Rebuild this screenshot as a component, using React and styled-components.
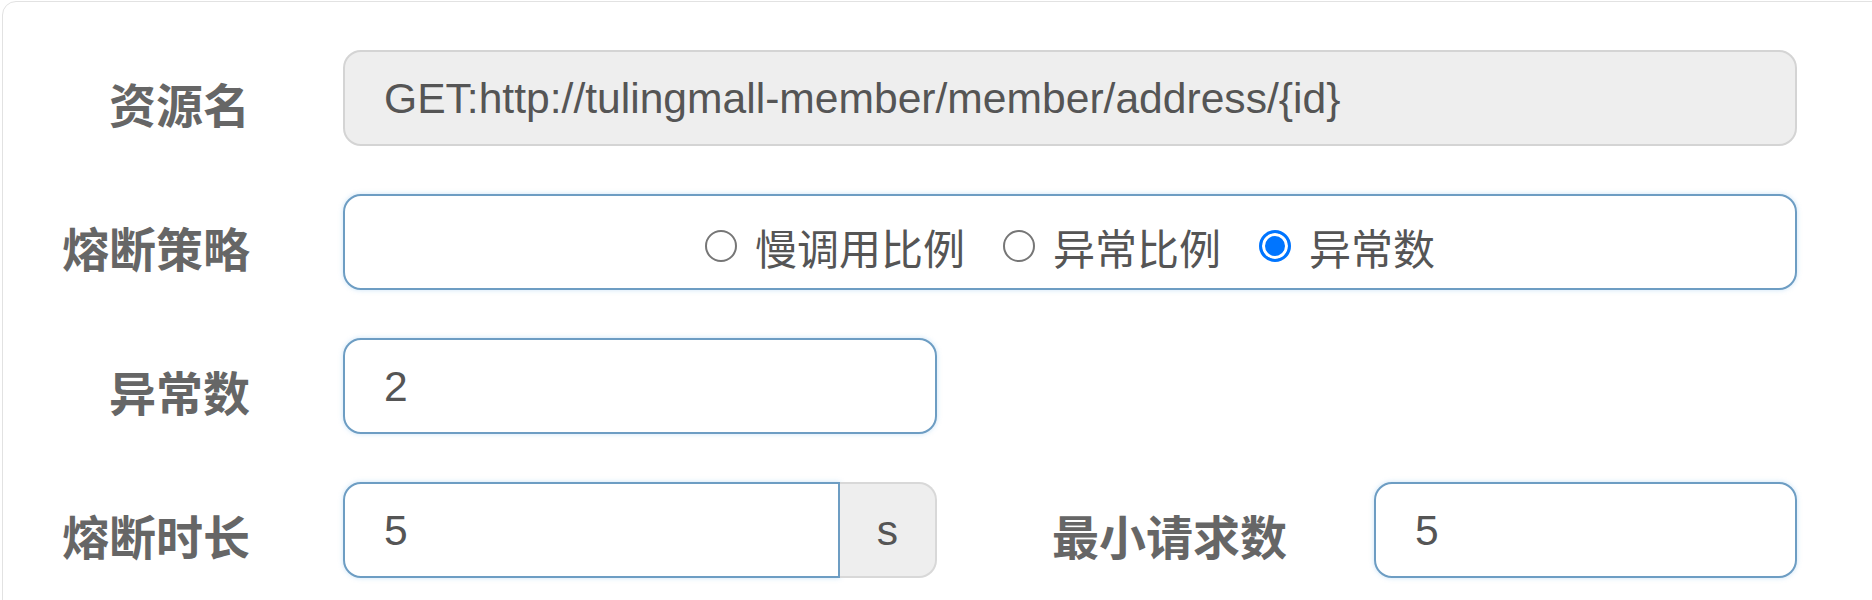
import React from "react";
import styled, { createGlobalStyle, css } from "styled-components";

const GlobalStyle = createGlobalStyle`
  html, body {
    margin: 0;
    padding: 0;
    background: #ffffff;
  }
  body {
    font-family: "Liberation Sans", "Noto Sans CJK SC", sans-serif;
    overflow: hidden;
  }
`;

const Card = styled.form`
  box-sizing: border-box;
  margin: 1px 0 0 2px;
  width: calc(100% + 40px);
  height: 660px;
  border: 1px solid #e2e2e2;
  border-radius: 14px;
  background: #ffffff;
  padding: 48px 0 0 0;
  display: flex;
  flex-direction: column;
  gap: 48px;
`;

const Row = styled.div`
  display: flex;
  align-items: stretch;
  height: 96px;
`;

const Label = styled.label`
  box-sizing: border-box;
  flex-shrink: 0;
  width: ${(p) => p.$width || 247}px;
  display: flex;
  align-items: center;
  justify-content: flex-end;
  padding-top: 8px;
  font-family: "Noto Sans CJK SC", sans-serif;
  font-weight: 700;
  font-size: 47px;
  color: #666666;
  white-space: nowrap;
`;

const activeBorder = css`
  border: 2px solid #6d9dc3;
  box-shadow: 0 0 5px rgba(102, 175, 233, 0.35);
`;

const Control = styled.div`
  margin-left: ${(p) => p.$gap ?? 93}px;
  display: flex;
  width: ${(p) => p.$width}px;
`;

const TextInput = styled.input`
  box-sizing: border-box;
  width: 100%;
  height: 96px;
  margin: 0;
  padding: 0 39px;
  font-family: "Liberation Sans", sans-serif;
  font-size: 42.6px;
  color: #555555;
  outline: none;
  border-radius: ${(p) => (p.$joined ? "18px 0 0 18px" : "18px")};
  ${(p) =>
    p.readOnly
      ? css`
          background: #eeeeee;
          border: 2px solid #d4d4d4;
        `
      : css`
          background: #ffffff;
          ${activeBorder}
        `}
`;

const Addon = styled.span`
  box-sizing: border-box;
  flex-shrink: 0;
  width: 97px;
  height: 96px;
  display: flex;
  align-items: center;
  justify-content: center;
  background: #eeeeee;
  border: 2px solid #d8d8d8;
  border-left: none;
  border-radius: 0 18px 18px 0;
  font-family: "Liberation Sans", sans-serif;
  font-size: 42.6px;
  color: #555555;
`;

const RadioBox = styled.div`
  box-sizing: border-box;
  width: 100%;
  height: 96px;
  border-radius: 18px;
  background: #ffffff;
  ${activeBorder}
  display: flex;
  align-items: center;
  justify-content: center;
  gap: 38px;
  padding-top: 8px;
`;

const RadioItem = styled.label`
  display: flex;
  align-items: center;
  gap: 18px;
  font-family: "Noto Sans CJK SC", sans-serif;
  font-size: 42px;
  color: #555555;
  white-space: nowrap;
`;

const Radio = styled.input`
  appearance: none;
  box-sizing: border-box;
  margin: 0;
  width: 32px;
  height: 32px;
  border-radius: 50%;
  border: 2px solid #767676;
  background: #ffffff;
  flex-shrink: 0;
  &:checked {
    border: 3px solid #0075ff;
    background: #0075ff;
    box-shadow: inset 0 0 0 3px #ffffff;
  }
`;

const strategies = [
  { key: "slow", text: "慢调用比例" },
  { key: "ratio", text: "异常比例" },
  { key: "count", text: "异常数" },
];

export default function App() {
  const [strategy, setStrategy] = React.useState("count");
  return (
    <>
      <GlobalStyle />
      <Card onSubmit={(e) => e.preventDefault()}>
        <Row>
          <Label>资源名</Label>
          <Control $width={1454}>
            <TextInput
              readOnly
              value="GET:http://tulingmall-member/member/address/{id}"
            />
          </Control>
        </Row>
        <Row>
          <Label>熔断策略</Label>
          <Control $width={1454}>
            <RadioBox>
              {strategies.map((s) => (
                <RadioItem key={s.key}>
                  <Radio
                    type="radio"
                    name="strategy"
                    checked={strategy === s.key}
                    onChange={() => setStrategy(s.key)}
                  />
                  {s.text}
                </RadioItem>
              ))}
            </RadioBox>
          </Control>
        </Row>
        <Row>
          <Label>异常数</Label>
          <Control $width={594}>
            <TextInput defaultValue="2" />
          </Control>
        </Row>
        <Row>
          <Label>熔断时长</Label>
          <Control $width={594}>
            <TextInput $joined defaultValue="5" />
            <Addon>s</Addon>
          </Control>
          <Label $width={350}>最小请求数</Label>
          <Control $gap={87} $width={423}>
            <TextInput defaultValue="5" />
          </Control>
        </Row>
      </Card>
    </>
  );
}
